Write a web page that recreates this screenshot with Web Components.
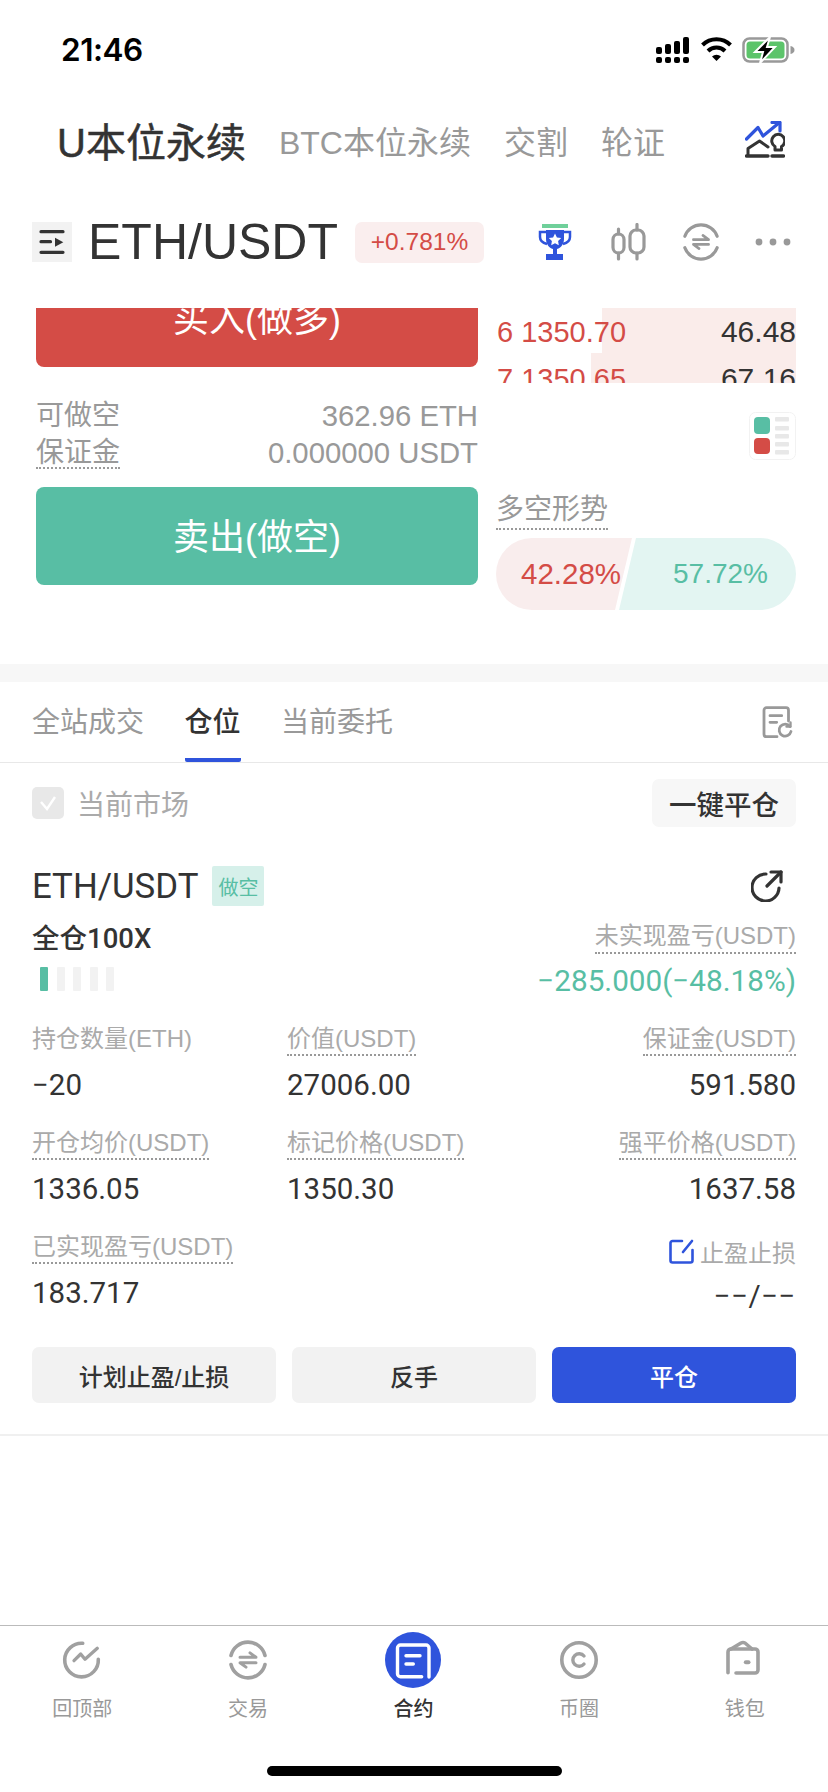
<!DOCTYPE html>
<html lang="zh">
<head>
<meta charset="utf-8">
<title>合约</title>
<style>
html,body{margin:0;padding:0;background:#fff;}
body{
    width:828px;height:1792px;overflow:hidden;
    display:flex;flex-direction:column;
    font-family:"Liberation Sans","Noto Sans CJK SC",sans-serif;
    color:#333;
}
.spacer{flex:1;}
svg{display:block;}
</style>
</head>
<body>
<status-bar></status-bar>
<market-tabs></market-tabs>
<pair-header></pair-header>
<trade-panel></trade-panel>
<position-tabs></position-tabs>
<position-filter></position-filter>
<position-card></position-card>
<div class="spacer"></div>
<bottom-nav>
    <nav-item label="回顶部">
        <svg width="40" height="40" viewBox="0 0 40 40" fill="none" stroke="#a0a0a0" stroke-width="3.600" stroke-linecap="round" stroke-linejoin="round" style="margin-left:-2px"><path d="M20.700 3.300A16.800 16.800 0 1 0 36.300 19.300"/><path d="M12 20.700L18.700 14l4.300 5.300L35.300 8.300" stroke-width="3.300"/></svg>
    </nav-item>
    <nav-item label="交易">
        <svg width="40" height="40" viewBox="0 0 40 40" fill="none" stroke="#a0a0a0" stroke-width="3.600" stroke-linecap="round" stroke-linejoin="round"><path d="M3 15.500A17.500 17.500 0 0 1 37 15.500"/><path d="M3 24.500A17.500 17.500 0 0 0 37 24.500"/><path d="M12 17.300H28l-6-4.400" stroke-width="3"/><path d="M28 22.700H12l6 4.400" stroke-width="3"/></svg>
    </nav-item>
    <nav-item label="合约" active>
        <svg width="56" height="56" viewBox="0 0 56 56" fill="none" style="margin-left:-1px"><circle cx="28" cy="28" r="28" fill="#2f54dc"/><path d="M36.700 44.700H15.500a3 3 0 0 1-3-3V16a3 3 0 0 1 3-3H41a3 3 0 0 1 3 3V45" stroke="#fff" stroke-width="3.400" stroke-linecap="round"/><path d="M21 23.700H35M21 32H28.300" stroke="#fff" stroke-width="3.400" stroke-linecap="round"/></svg>
    </nav-item>
    <nav-item label="币圈">
        <svg width="40" height="40" viewBox="0 0 40 40" fill="none" stroke="#a0a0a0" stroke-width="3.600" stroke-linecap="round" style="margin-left:-2px"><circle cx="20" cy="20" r="17.200"/><path d="M25 16a6.300 6.300 0 1 0 0 8" stroke-width="3.400"/></svg>
    </nav-item>
    <nav-item label="钱包">
        <svg width="40" height="40" viewBox="0 0 40 40" fill="none" stroke="#a0a0a0" stroke-width="3.600" stroke-linecap="round" stroke-linejoin="round" style="margin-left:-2px"><path d="M4 32.700V12a3 3 0 0 1 3-3H31a3 3 0 0 1 3 3V30a3 3 0 0 1-3 3H12"/><path d="M7 9L17 3q2-1 4 0L28 9"/><rect x="19.800" y="20.300" width="6.700" height="4" rx="2" fill="#a0a0a0" stroke="none"/></svg>
    </nav-item>
</bottom-nav>

<script>
// every element clones its own template into an open shadow root
function tpl(html){
    const t = document.createElement('template');
    t.innerHTML = html;
    return t;
}
class Base extends HTMLElement{
    constructor(){
        super();
        this.attachShadow({mode:'open'}).appendChild(this.constructor.template.content.cloneNode(true));
    }
}

class StatusBar extends Base{}
StatusBar.template = tpl(`
<style>
:host{display:flex;height:100px;box-sizing:border-box;padding:34px 32px 0 61px;justify-content:space-between;align-items:flex-start;}
.time{font:600 31.500px/32px Inter,"Liberation Sans",sans-serif;color:#000;letter-spacing:-.5px;}
.icons{display:flex;margin-top:3px;gap:12px;}
svg{display:block;}
</style>
<div class="time">21:46</div>
<div class="icons">
  <svg width="33" height="26" viewBox="0 0 33 26" fill="#000"><rect x="0" y="10" width="6" height="7" rx="2"/><rect x="9" y="7" width="6" height="10" rx="2"/><rect x="18" y="4" width="6" height="13" rx="2"/><rect x="27" y="0" width="6" height="17" rx="2"/><rect x="0" y="20" width="6" height="6" rx="2"/><rect x="9" y="20" width="6" height="6" rx="2"/><rect x="18" y="20" width="6" height="6" rx="2"/><rect x="27" y="20" width="6" height="6" rx="2"/></svg>
  <svg width="31" height="24" viewBox="0 0 31 24" fill="none" stroke="#000" stroke-width="4"><path d="M1.500 8a20 20 0 0 1 28 0"/><path d="M7 14a12 12 0 0 1 17 0"/><path d="M11 19.500L15.500 24 20 19.500a6.500 6.500 0 0 0-9 0z" fill="#000" stroke="none"/></svg>
  <svg width="54" height="26" viewBox="0 0 54 26" style="margin-left:-2px"><rect x="1.500" y="1.500" width="44" height="23" rx="6" fill="none" stroke="#999" stroke-width="2.500"/><rect x="4.500" y="4.500" width="38" height="17" rx="3.500" fill="#5cc46a"/><path d="M48.500 9c2.500 .5 4 2 4 4s-1.500 3.500-4 4z" fill="#999"/><path d="M28 0L13 15h8l-3 11 15-16h-8l3-10z" fill="#000" stroke="#fff" stroke-width="2"/></svg>
</div>
`);
customElements.define('status-bar', StatusBar);

class MarketTabs extends Base{}
MarketTabs.template = tpl(`
<style>
:host{display:flex;height:80px;align-items:center;padding:0 43px 0 57px;color:#999;font-size:32px;}
.cur{font-size:40px;color:#333;margin-right:33px;-webkit-text-stroke:.5px #333;}
.t{margin-right:33px;}
svg{margin-left:auto;}
</style>
<span class="cur">U本位永续</span>
<span class="t">BTC本位永续</span>
<span class="t">交割</span>
<span class="t">轮证</span>
<svg width="40" height="38" viewBox="0 0 40 38" fill="none" stroke-linejoin="round" stroke-linecap="round">
  <path d="M1.500 18L13 6.500l5 8.500L34.500 1.500" stroke="#2f54dc" stroke-width="3.200"/><path d="M27 1.500h8V10" stroke="#2f54dc" stroke-width="3.200"/>
  <path d="M3 34V27.500L14.500 20l8.500 6" stroke="#333" stroke-width="3"/><path d="M1.500 35H23" stroke="#333" stroke-width="3.400"/>
  <path d="M30 29v-3.500a6.500 6.500 0 1 1 6.500 0V29z" stroke="#333" stroke-width="3"/><path d="M27 35H38.500" stroke="#333" stroke-width="3.400"/>
</svg>
`);
customElements.define('market-tabs', MarketTabs);

class PairHeader extends Base{}
PairHeader.template = tpl(`
<style>
:host{display:flex;height:128px;box-sizing:border-box;padding:0 37px 4px 32px;align-items:center;}
.menu{width:40px;height:40px;background:#f2f2f2;}
.name{font-size:50px;line-height:60px;margin-left:16px;color:#333;}
.chg{margin-left:17px;width:129px;height:41px;border-radius:7px;background:#faeeee;color:#d44c46;font-size:24.500px;display:flex;align-items:center;justify-content:center;}
.ic{display:flex;margin-left:auto;align-items:center;}
</style>
<svg class="menu" viewBox="0 0 40 40"><g fill="none" stroke="#333" stroke-width="3.200" stroke-linecap="round"><path d="M9 9.700H31M9 19.700H18.500M9 30.300H31"/></g><path d="M23 15.700l8.300 4.500-8.300 4.500z" fill="#333"/></svg>
<span class="name">ETH/USDT</span>
<span class="chg">+0.781%</span>
<div class="ic">
  <svg width="34" height="36" viewBox="0 0 34 36"><rect x="4" y="0" width="26" height="4" fill="#6fd09a"/><path d="M8 6h18v9c0 5-3 9-7 10v5h6v6H8v-6h7v-5C11 24 8 20 8 15z" fill="#2f54dc" stroke="none"/><path d="M8 8H2v5c0 4 3 6 7 7M26 8h6v5c0 4-3 6-7 7" fill="none" stroke="#2f54dc" stroke-width="2.500"/><path d="M17 9.500l1.900 3.900 4.300 .6-3.100 3 .7 4.300-3.800-2-3.800 2 .7-4.300-3.100-3 4.300-.6z" fill="#fff"/></svg>
  <svg width="35" height="38" viewBox="0 0 35 38" fill="none" stroke="#999" stroke-width="3.200" stroke-linecap="round" style="margin-left:39px"><rect x="2" y="11" width="11" height="19" rx="5.500"/><path d="M7.500 6v5M7.500 30v6"/><rect x="19" y="7" width="14" height="23" rx="6"/><path d="M26 1.500V7M26 30v6"/></svg>
  <svg width="38" height="38" viewBox="0 0 40 40" fill="none" stroke="#999" stroke-width="3.400" stroke-linecap="round" stroke-linejoin="round" style="margin-left:36px"><path d="M3 14A18 18 0 0 1 37 14"/><path d="M3 26A18 18 0 0 0 37 26"/><path d="M12 17.500H28l-6-4.400" stroke-width="2.800"/><path d="M28 22.500H12l6 4.400" stroke-width="2.800"/></svg>
  <svg width="36" height="8" viewBox="0 0 36 8" fill="#999" style="margin-left:35px"><circle cx="4" cy="4" r="3.400"/><circle cx="18" cy="4" r="3.400"/><circle cx="32" cy="4" r="3.400"/></svg>
</div>
`);
customElements.define('pair-header', PairHeader);

class BookRow extends Base{
    connectedCallback(){
        const s = this.shadowRoot;
        s.querySelector('.p').textContent = this.getAttribute('price');
        s.querySelector('.q').textContent = this.getAttribute('qty');
        this.style.setProperty('--w', this.getAttribute('bar') + 'px');
    }
}
BookRow.template = tpl(`
<style>
:host{display:flex;height:47px;box-sizing:border-box;padding:5px 0 0 1px;justify-content:space-between;align-items:center;font-size:29px;
  background:linear-gradient(to left,#faecea var(--w),transparent var(--w));}
.p{color:#d44c46;}
.q{color:#333;font-size:30px;}
</style>
<span class="p"></span><span class="q"></span>
`);
customElements.define('book-row', BookRow);

class LongShort extends Base{}
LongShort.template = tpl(`
<style>
:host{display:flex;height:72px;width:300px;border-radius:36px;overflow:hidden;font-size:28px;line-height:72px;}
.l{width:136px;box-sizing:border-box;padding-left:25px;font-size:29.500px;background:#f9eded;color:#d44c46;clip-path:polygon(0 0,100% 0,calc(100% - 17px) 100%,0 100%);white-space:nowrap;}
.s{width:177px;margin-left:-13px;box-sizing:border-box;padding-right:28px;text-align:right;background:#e3f5f2;color:#58bea4;clip-path:polygon(17px 0,100% 0,100% 100%,0 100%);}
</style>
<div class="l">42.28%</div><div class="s">57.72%</div>
`);
customElements.define('long-short', LongShort);

class TradePanel extends Base{}
TradePanel.template = tpl(`
<style>
:host{display:flex;height:374px;box-sizing:border-box;padding:0 32px 0 36px;border-bottom:18px solid #f7f7f7;color:#999;}
.left{width:442px;}
.right{width:300px;margin-left:18px;}
.clip{overflow:hidden;}
.btn{height:98px;box-sizing:border-box;padding-bottom:4px;border-radius:8px;color:#fff;font-size:36px;display:flex;align-items:center;justify-content:center;}
.buy{background:#d44c46;margin-top:-39px;}
.sell{background:#58bea4;margin-top:16px;}
.line{display:flex;justify-content:space-between;align-items:flex-start;font-size:28px;line-height:37px;height:37px;}
.line .n{font-size:29.300px;}
.rows{margin-top:30px;}
.dot{border-bottom:2px dotted #999;display:inline-block;}
.line .dot{height:33px;}
.book{height:75px;}
.inner{margin-top:-2px;}
.legend{display:block;margin:29px 0 0 auto;}
.trend{font-size:28px;margin-top:32px;height:46px;}
.trend .dot{line-height:36px;}
</style>
<div class="left">
  <div class="clip" style="height:59px"><div class="btn buy">买入(做多)</div></div>
  <div class="rows">
    <div class="line"><span>可做空</span><span class="n">362.96 ETH</span></div>
    <div class="line"><span class="dot">保证金</span><span class="n">0.000000 USDT</span></div>
  </div>
  <div class="btn sell">卖出(做空)</div>
</div>
<div class="right">
  <div class="clip book"><div class="inner">
    <book-row price="6 1350.70" qty="46.48" bar="194"></book-row>
    <book-row price="7 1350.65" qty="67.16" bar="205"></book-row>
  </div></div>
  <svg class="legend" width="47" height="48" viewBox="0 0 47 48"><rect x=".5" y=".5" width="46" height="47" rx="6" fill="#fff" stroke="#f2f2f2"/><rect x="5" y="5" width="16" height="17" rx="4" fill="#58bea4"/><rect x="5" y="26" width="16" height="16" rx="4" fill="#d44c46"/><g fill="#e8e8e8"><rect x="26" y="5" width="14" height="4.500" rx="1"/><rect x="26" y="14" width="14" height="4.500" rx="1"/><rect x="26" y="22" width="14" height="4.500" rx="1"/><rect x="26" y="30" width="14" height="4.500" rx="1"/><rect x="26" y="38" width="14" height="4.500" rx="1"/></g></svg>
  <div class="trend"><span class="dot">多空形势</span></div>
  <long-short></long-short>
</div>
`);
customElements.define('trade-panel', TradePanel);

class PositionTabs extends Base{}
PositionTabs.template = tpl(`
<style>
:host{display:flex;height:81px;box-sizing:border-box;padding:0 34px 0 32px;border-bottom:1px solid #e8e8e8;font-size:28px;color:#999;align-items:flex-start;}
.t{margin-right:40.500px;line-height:82px;height:80px;box-sizing:border-box;}
.on{color:#333;font-weight:500;border-bottom:4px solid #2f54dc;border-radius:0 0 2px 2px;}
svg{margin:24px 0 0 auto;}
</style>
<span class="t">全站成交</span><span class="t on">仓位</span><span class="t">当前委托</span>
<svg width="32" height="33" viewBox="0 0 32 33" fill="none" stroke="#999" stroke-width="2.800" stroke-linecap="round" stroke-linejoin="round"><path d="M15 30.700H4.500a2.500 2.500 0 0 1-2.500-2.500V4.200a2.500 2.500 0 0 1 2.500-2.500H24a2.500 2.500 0 0 1 2.500 2.500V15"/><path d="M8 9.700H19.700M8 16.300H14.700"/><path d="M28 20.500a6 6 0 1 0 1 5"/><path d="M24.500 20.500H28.500V16.500" stroke-width="2.400"/></svg>
`);
customElements.define('position-tabs', PositionTabs);

class PositionFilter extends Base{}
PositionFilter.template = tpl(`
<style>
:host{display:flex;box-sizing:border-box;padding:16px 32px 0;align-items:center;font-size:28px;color:#aaa;}
.box{width:32px;height:32px;border-radius:5px;background:#e8e8e8;display:flex;align-items:center;justify-content:center;margin-right:13px;}
.btn{margin-left:auto;width:144px;height:48px;border-radius:7px;background:#f7f7f7;color:#333;font-weight:500;font-size:27.500px;display:flex;align-items:center;justify-content:center;}
</style>
<span class="box"><svg width="20" height="16" viewBox="0 0 20 16" fill="none" stroke="#fff" stroke-width="2.400"><path d="M3 7l6 7L17 2"/></svg></span>
<span>当前市场</span>
<span class="btn">一键平仓</span>
`);
customElements.define('position-filter', PositionFilter);

class StatCell extends Base{
    connectedCallback(){
        const s = this.shadowRoot;
        s.querySelector('.label').textContent = this.getAttribute('label');
        s.querySelector('.value').textContent = this.getAttribute('value');
    }
}
StatCell.template = tpl(`
<style>
:host{display:block;font-size:24px;}
:host([right]){text-align:right;}
.label{display:inline-block;color:#aaa;line-height:34px;height:32px;border-bottom:2px dotted #999;vertical-align:top;}
:host([plain]) .label{border-bottom-color:transparent;}
.value{margin-top:11px;font:400 29.500px/36px Roboto,"Liberation Sans",sans-serif;color:#333;}
</style>
<div><span class="label"></span></div>
<div class="value"></div>
`);
customElements.define('stat-cell', StatCell);

class PositionCard extends Base{}
PositionCard.template = tpl(`
<style>
:host{display:block;box-sizing:border-box;padding:39px 32px 31px;border-bottom:2px solid #f0f0f0;}
.head{display:flex;height:40px;align-items:center;}
.sym{font:400 34.800px/40px Roboto,"Liberation Sans",sans-serif;color:#333;}
.tag{margin-left:14px;width:52px;height:40px;background:#d6f0ea;color:#58bea4;font-size:20px;border-radius:2px;display:flex;align-items:center;justify-content:center;}
.head svg{margin:0 13px 0 auto;}
.row{display:flex;justify-content:space-between;margin-top:14px;}
.lev{font:500 27.500px/32px Roboto,"Noto Sans CJK SC",sans-serif;margin-top:3px;color:#333;}
.bars{display:flex;gap:8.500px;margin:12px 0 0 8px;}
.bars i{width:8px;height:24px;background:#f2f2f2;border-radius:1px;}
.bars i:first-child{background:#58bea4;}
.pnl{text-align:right;font-size:24px;}
.pnl .label{display:inline-block;color:#aaa;line-height:32px;border-bottom:2px dotted #999;}
.pnl .value{margin-top:9px;font:400 29.700px/36px Roboto,"Liberation Sans",sans-serif;color:#58bea4;}
.grid{display:grid;grid-template-columns:255px 1fr auto;row-gap:23px;margin-top:23px;}
.sl{text-align:right;font-size:24px;}
.sl .top{display:flex;justify-content:flex-end;align-items:center;height:32px;margin-top:5px;color:#aaa;gap:6px;}
.sl .v{font:400 29.500px/36px Roboto,"Liberation Sans",sans-serif;letter-spacing:.5px;margin-top:11px;color:#333;}
.acts{display:flex;gap:16px;margin-top:33px;}
.acts span{flex:1;height:56px;border-radius:7px;background:#f2f2f2;color:#333;font-size:24px;font-weight:500;display:flex;align-items:center;justify-content:center;}
.acts .pri{background:#2f54dc;color:#fff;}
</style>
<div class="head">
  <span class="sym">ETH/USDT</span><span class="tag">做空</span>
  <svg width="32" height="32" viewBox="0 0 32 32" fill="none" stroke="#333" stroke-width="3.200" stroke-linecap="round" stroke-linejoin="round"><path d="M15 4A13.500 13.500 0 1 0 28 18"/><path d="M16 16L30 2"/><path d="M20 2h10v10"/></svg>
</div>
<div class="row">
  <div><div class="lev">全仓100X</div><div class="bars"><i></i><i></i><i></i><i></i><i></i></div></div>
  <div class="pnl"><div><span class="label">未实现盈亏(USDT)</span></div><div class="value">−285.000(−48.18%)</div></div>
</div>
<div class="grid">
  <stat-cell plain label="持仓数量(ETH)" value="−20"></stat-cell>
  <stat-cell label="价值(USDT)" value="27006.00"></stat-cell>
  <stat-cell right label="保证金(USDT)" value="591.580"></stat-cell>
  <stat-cell label="开仓均价(USDT)" value="1336.05"></stat-cell>
  <stat-cell label="标记价格(USDT)" value="1350.30"></stat-cell>
  <stat-cell right label="强平价格(USDT)" value="1637.58"></stat-cell>
  <stat-cell label="已实现盈亏(USDT)" value="183.717"></stat-cell>
  <div></div>
  <div class="sl">
    <div class="top"><svg width="25" height="25" viewBox="0 0 25 25" fill="none" stroke="#2f54dc" stroke-width="2.600" stroke-linecap="round" stroke-linejoin="round"><path d="M13 2H3.500A2 2 0 0 0 1.500 4v17.500a2 2 0 0 0 2 2H21.500a2 2 0 0 0 2-2V11"/><path d="M23 2L14 13"/></svg><span>止盈止损</span></div>
    <div class="v">−−/−−</div>
  </div>
</div>
<div class="acts"><span>计划止盈/止损</span><span>反手</span><span class="pri">平仓</span></div>
`);
customElements.define('position-card', PositionCard);

class NavItem extends Base{
    connectedCallback(){
        this.shadowRoot.querySelector('.lb').textContent = this.getAttribute('label');
    }
}
NavItem.template = tpl(`
<style>
:host{flex:1;display:flex;flex-direction:column;align-items:center;}
.ic{height:56px;display:flex;align-items:center;justify-content:center;}
.lb{margin-top:7px;font-size:20px;line-height:28px;color:#999;margin-left:-1px;}
:host([active]) .lb{color:#333;font-weight:500;}
</style>
<div class="ic"><slot></slot></div>
<div class="lb"></div>
`);
customElements.define('nav-item', NavItem);

class BottomNav extends Base{}
BottomNav.template = tpl(`
<style>
:host{display:block;border-top:1px solid #bbb;}
.items{display:flex;padding-top:6px;}
.home{width:295px;height:10px;border-radius:5px;background:#000;margin:43px auto 16px;}
</style>
<div class="items"><slot></slot></div>
<div class="home"></div>
`);
customElements.define('bottom-nav', BottomNav);
</script>
</body>
</html>
